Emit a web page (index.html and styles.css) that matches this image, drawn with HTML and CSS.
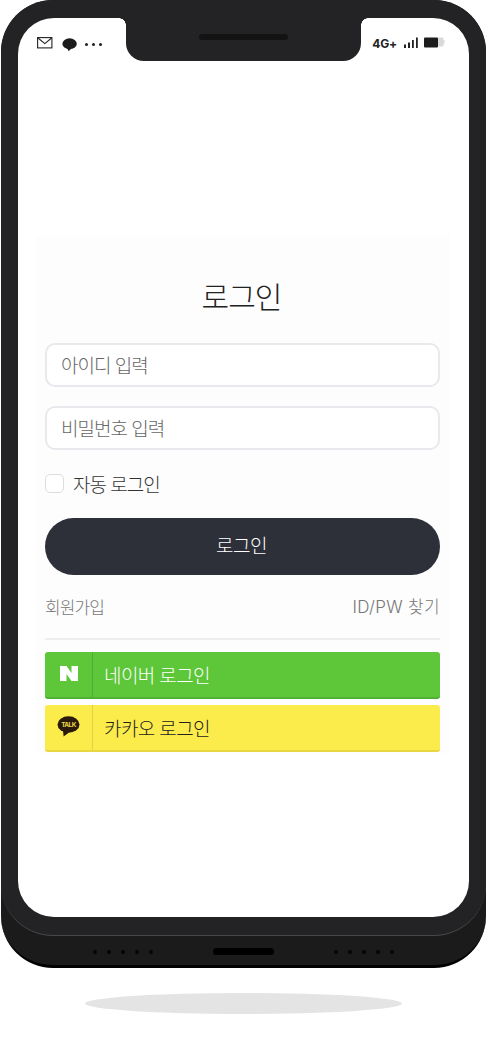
FILE: index.html
```html
<!DOCTYPE html>
<html lang="ko">
<head>
<meta charset="utf-8">
<title>로그인</title>
<link rel="stylesheet" href="styles.css">
</head>
<body>
<div class="stage">
  <div class="phone">
    <div class="front">
      <div class="notch"><span class="earpiece"></span></div>
      <div class="screen">
        <div class="status">
          <div class="status-left">
            <svg class="ic-mail" width="16" height="12" viewBox="0 0 16 12"><rect x=".6" y=".6" width="14.3" height="10.3" fill="none" stroke="#222" stroke-width="1.1"/><path d="M1 1l6.800 5.600L14.600 1" fill="none" stroke="#222" stroke-width="1.1"/></svg>
            <svg class="ic-chat" width="16" height="14" viewBox="0 0 16 14"><ellipse cx="7.600" cy="5.700" rx="7.200" ry="5.400" fill="#1c1c1c"/><path d="M5 9.500l1.600 3.800 3-3z" fill="#1c1c1c"/></svg>
            <span class="dots"><i></i><i></i><i></i></span>
          </div>
          <div class="status-right">
            <span class="net">4G+</span>
            <svg width="15" height="11" viewBox="0 0 15 11"><path d="M1 7.500h2V11H1zM5 5.500h2V11H5zM9 3h1.800v8H9zM13 .5h1.800V11H13z" fill="#222"/></svg>
            <svg class="ic-batt" width="21" height="11" viewBox="0 0 21 11"><rect x="0" y=".5" width="14" height="10" rx="1" fill="#1c1c1c"/><path d="M14 .5h4.500a1 1 0 0 1 1 1v1.800h1v3.400h-1v1.800a1 1 0 0 1-1 1H14z" fill="#d9d9d9"/></svg>
          </div>
        </div>
        <main class="card">
          <h1 class="title">로그인</h1>
          <div class="field">아이디 입력</div>
          <div class="field">비밀번호 입력</div>
          <label class="auto"><span class="check"></span><span>자동 로그인</span></label>
          <div class="submit">로그인</div>
          <div class="links"><span>회원가입</span><span class="find">ID/PW 찾기</span></div>
          <hr class="rule">
          <div class="social naver">
            <span class="social-icon"><svg width="18" height="15" viewBox="0 0 18 15"><path d="M0 0h6.500l5 7V0H18v15h-6.500l-5-7v7H0z" fill="#fff"/></svg></span>
            <span class="social-label">네이버 로그인</span>
          </div>
          <div class="social kakao">
            <span class="social-icon"><svg width="23" height="21" viewBox="0 0 23 21"><ellipse cx="11.500" cy="8.500" rx="11" ry="8.300" fill="#2a1a0c"/><path d="M6 14.500l.6 6 5.400-4z" fill="#2a1a0c"/><text x="11.500" y="11" class="talk">TALK</text></svg></span>
            <span class="social-label">카카오 로그인</span>
          </div>
        </main>
      </div>
    </div>
    <div class="ports">
      <span class="grille"><i></i><i></i><i></i><i></i><i></i></span>
      <span class="port"></span>
      <span class="grille"><i></i><i></i><i></i><i></i><i></i></span>
    </div>
  </div>
  <div class="shadow"></div>
</div>
</body>
</html>
```
FILE: styles.css
```css
* { box-sizing: border-box; }
html, body { margin: 0; background: #fff; }
body { font-family: "Noto Sans CJK KR", "Noto Sans", sans-serif; }
.stage { width: 487px; height: 1046px; padding: 0 1px; overflow: hidden; }
.phone { height: 968px; background: #1b1b1c; border-radius: 52px; border-bottom: 3px solid #000; }
.front {
  position: relative;
  height: 936px;
  padding: 18px 17px 18px;
  background: #232325;
  border-radius: 52px;
  border-bottom: 1px solid #48484a;
}
.notch {
  position: absolute;
  left: 125px; top: 18px;
  width: 235px; height: 43px;
  background: #232325;
  border-radius: 0 0 18px 18px;
  display: flex;
  justify-content: center;
}
.notch::before, .notch::after {
  content: "";
  position: absolute;
  top: 0;
  width: 7px; height: 7px;
}
.notch::before { left: -7px; background: radial-gradient(circle at 0 100%, transparent 6.500px, #232325 7px); }
.notch::after { right: -7px; background: radial-gradient(circle at 100% 100%, transparent 6.500px, #232325 7px); }
.earpiece { width: 89px; height: 6px; margin-top: 16px; border-radius: 3px; background: #131314; }
.screen { height: 899px; background: #fff; border-radius: 36px; overflow: hidden; }
.status { height: 52px; padding: 19px 24px 0 19px; display: flex; justify-content: space-between; }
.status-left, .status-right { display: flex; align-items: flex-start; }
.ic-chat { margin-left: 9px; margin-top: 1px; }
.dots { display: flex; gap: 4px; margin-left: 7px; margin-top: 6px; }
.dots i { width: 3px; height: 3px; border-radius: 50%; background: #222; }
.status-right { gap: 5px; }
.net { font: 700 12px/13px Inter, sans-serif; color: #222; letter-spacing: -.2px; margin-right: 1px; }
.ic-batt { margin-left: 1px; }
.card {
  margin: 165px 19px 0 18px;
  padding: 38px 10px 0 9px;
  height: 518px;
  background: #fdfdfd;
}
.title { margin: 0 2px 0 0; font-size: 30px; line-height: 44px; font-weight: 300; text-align: center; color: #222; letter-spacing: -1px; }
.field {
  height: 44px;
  margin-top: 19px;
  padding-left: 14px;
  border: 2px solid #e8e9ec;
  border-radius: 10px;
  background: #fff;
  font-size: 19px;
  font-weight: 300;
  line-height: 39px;
  letter-spacing: -1px;
  color: #666;
}
.title + .field { margin-top: 26px; }
.auto { display: flex; align-items: center; gap: 9px; margin-top: 23px; height: 20px; font-size: 19px; font-weight: 300; color: #333; letter-spacing: -1px; }
.check { width: 19px; height: 19px; border: 1.500px solid #dcdde1; border-radius: 5px; background: #fff; }
.submit {
  height: 57px;
  margin-top: 25px;
  border-radius: 29px;
  background: #2d3039;
  color: #fff;
  text-align: center;
  font-size: 19px;
  font-weight: 300;
  line-height: 53px;
  letter-spacing: -.4px;
  padding-right: 2px;
}
.links { display: flex; justify-content: space-between; margin-top: 20px; font-size: 17px; font-weight: 300; line-height: 24px; color: #777; letter-spacing: -.9px; }
.find { font-family: Inter, "Noto Sans CJK KR", sans-serif; letter-spacing: .3px; }
.rule { height: 2px; margin: 19px 0 12px; border: 0; background: #eeeeee; }
.social { display: flex; height: 47px; border-radius: 3px; font-size: 19px; font-weight: 300; line-height: 46px; letter-spacing: -.6px; }
.social + .social { margin-top: 6px; }
.social-icon { width: 48px; display: flex; align-items: center; justify-content: center; padding-bottom: 2px; }
.social-label { padding-left: 11px; }
.naver { background: #5dc639; border-bottom: 2px solid #50b02f; color: #fff; }
.naver .social-icon { border-right: 1px solid #4fae30; }
.kakao { background: #fcec4b; border-bottom: 2px solid #e9d643; color: #222; }
.kakao .social-icon { border-right: 1px solid #e3d044; }
.talk { font: 700 6.500px Inter, sans-serif; fill: #ecd64a; text-anchor: middle; }
.ports { height: 29px; padding: 12px 0 0 92px; display: flex; align-items: flex-start; }
.grille { display: flex; gap: 10px; margin-top: 2px; }
.grille i { width: 4px; height: 4px; border-radius: 50%; background: #050505; }
.port { width: 61px; height: 7px; margin: 0 60px; border-radius: 4px; background: #000; }
.shadow { width: 317px; height: 21px; margin: 25px 0 0 84px; border-radius: 50%; background: #e4e4e4; }
```
